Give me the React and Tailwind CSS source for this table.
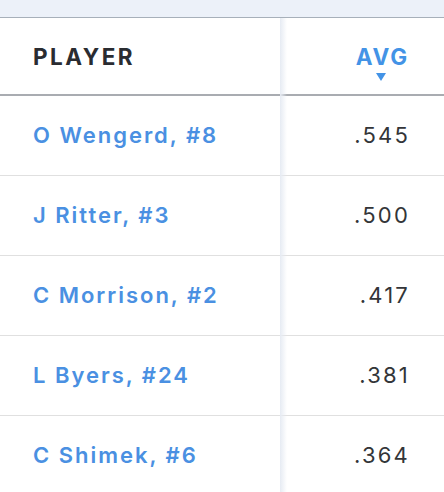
import React from 'react';

const players = [
    { name: 'O Wengerd, #8', avg: '.545' },
    { name: 'J Ritter, #3', avg: '.500' },
    { name: 'C Morrison, #2', avg: '.417' },
    { name: 'L Byers, #24', avg: '.381' },
    { name: 'C Shimek, #6', avg: '.364' },
];

const App = () => {
    return (
        <div className="w-[444px] h-[492px] overflow-hidden bg-white font-['Inter',sans-serif]">
            {/* top band */}
            <div className="h-[18px] bg-[#ecf1f9] border-b border-[#a7b0ba]" />

            <div className="flex">
                {/* Player column */}
                <div className="w-[280px] shrink-0">
                    <div className="h-[78px] flex items-center pl-[33px] border-b-2 border-[#a9acb1]">
                        <span className="text-[22.5px] font-bold tracking-[0.11em] text-[#2a2c31] pt-[2px]">PLAYER</span>
                    </div>
                    {players.map((p) => (
                        <div key={p.name} className="h-[80px] flex items-center pl-[33px] border-b border-[#e0e0e0]">
                            <span className="text-[22px] font-semibold tracking-[0.09em] text-[#4a90e2]">{p.name}</span>
                        </div>
                    ))}
                </div>

                {/* AVG column */}
                <div className="flex-1 relative">
                    <div className="absolute left-0 top-0 bottom-0 w-[7px] bg-gradient-to-r from-[#e6ebf3] to-white/0 pointer-events-none" />
                    <div className="h-[78px] flex items-center justify-end pr-[35px] border-b-2 border-[#a9acb1]">
                        <span className="relative text-[22.5px] font-bold tracking-[0.08em] text-[#4393e6] pt-[2px]">
                            AVG
                            <span className="absolute left-[calc(50%-6px)] top-[35px] w-0 h-0 border-l-[5px] border-r-[5px] border-t-[8px] border-l-transparent border-r-transparent border-t-[#4393e6]" />
                        </span>
                    </div>
                    {players.map((p) => (
                        <div key={p.avg} className="h-[80px] flex items-center justify-end pr-[34px] border-b border-[#e0e0e0]">
                            <span className="text-[22px] tracking-[0.1em] text-[#333538]">{p.avg}</span>
                        </div>
                    ))}
                </div>
            </div>
        </div>
    );
};

export default App;
